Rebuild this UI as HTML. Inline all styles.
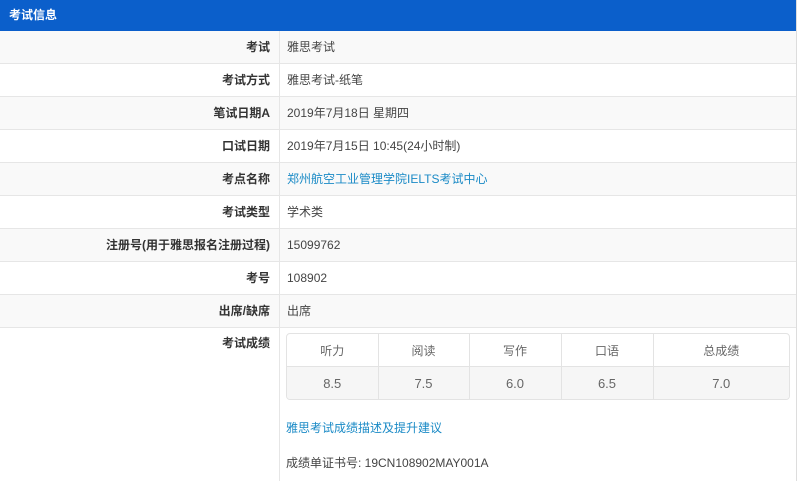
<!DOCTYPE html><html><head><meta charset="utf-8"><style>
body{margin:0;width:800px;height:481px;overflow:hidden;background:#fff;font-family:"Liberation Sans","Noto Sans CJK SC",sans-serif;font-size:12px;color:#333}
.wrap{position:absolute;left:0;top:0;width:796px;border-right:1px solid #ddd;height:481px}
.hd{height:31px;background:#0b5fcb;color:#fff;font-weight:bold;line-height:31px;padding-left:9px;font-size:12px}
.row{display:flex;height:32px;border-bottom:1px solid #e6e6e6}
.l{width:270px;text-align:right;font-weight:bold;line-height:32px;padding-right:9px;border-right:1px solid #e6e6e6;box-sizing:content-box;color:#333}
.v{padding-left:7px;line-height:32px;color:#444}
a{color:#1a8ac6;text-decoration:none}
.tb{position:absolute;left:286px;top:333px;width:502px;border:1px solid #e3e3e3;border-radius:4px;overflow:hidden}
table{border-collapse:collapse;width:100%;text-align:center;color:#666;table-layout:fixed}
td{border-right:1px solid #e3e3e3;height:32px;padding:0}
td:last-child{border-right:0}
tr.g td{background:#f6f6f6;font-size:13px;border-top:1px solid #e3e3e3}
</style></head><body><div class="wrap">
<div class="hd">考试信息</div>
<div>
<div class="row" style="background:#f9f9f9"><div class="l">考试</div><div class="v">雅思考试</div></div>
<div class="row" style="background:#fff"><div class="l">考试方式</div><div class="v">雅思考试-纸笔</div></div>
<div class="row" style="background:#f9f9f9"><div class="l">笔试日期A</div><div class="v">2019年7月18日 星期四</div></div>
<div class="row" style="background:#fff"><div class="l">口试日期</div><div class="v">2019年7月15日 10:45(24小时制)</div></div>
<div class="row" style="background:#f9f9f9"><div class="l">考点名称</div><div class="v"><a>郑州航空工业管理学院IELTS考试中心</a></div></div>
<div class="row" style="background:#fff"><div class="l">考试类型</div><div class="v">学术类</div></div>
<div class="row" style="background:#f9f9f9"><div class="l">注册号(用于雅思报名注册过程)</div><div class="v">15099762</div></div>
<div class="row" style="background:#fff"><div class="l">考号</div><div class="v">108902</div></div>
<div class="row" style="background:#f9f9f9"><div class="l">出席/缺席</div><div class="v">出席</div></div>
<div class="row" style="background:#fff;height:153px;border:0"><div class="l" style="line-height:30px">考试成绩</div><div class="v"></div></div>
</div>
<div class="tb"><table><colgroup><col style="width:91px"><col style="width:91px"><col style="width:92px"><col style="width:92px"><col></colgroup>
<tr><td>听力</td><td>阅读</td><td>写作</td><td>口语</td><td>总成绩</td></tr>
<tr class="g"><td>8.5</td><td>7.5</td><td>6.0</td><td>6.5</td><td>7.0</td></tr></table></div>
<div style="position:absolute;left:286px;top:419px"><a>雅思考试成绩描述及提升建议</a></div>
<div style="position:absolute;left:286px;top:454px;color:#444">成绩单证书号: 19CN108902MAY001A</div>
</div></body></html>
